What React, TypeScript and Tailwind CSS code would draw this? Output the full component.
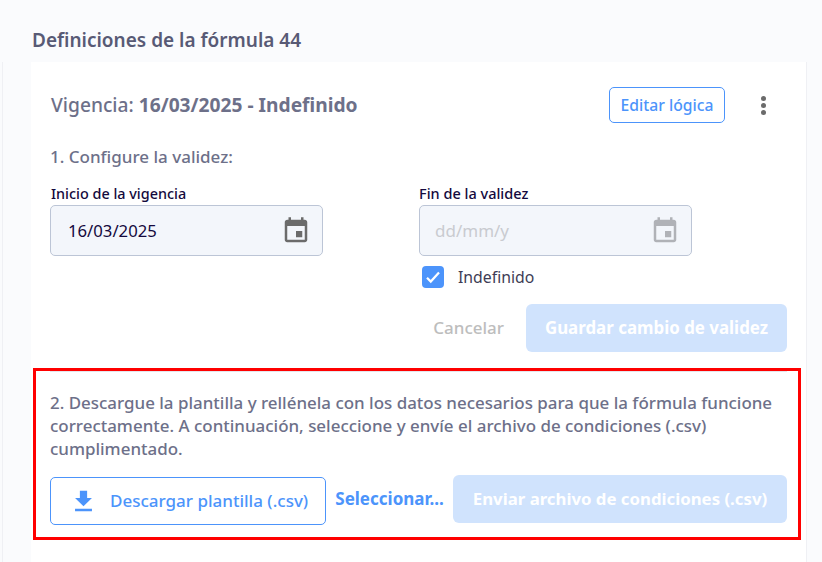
const Cal = ({ c }: { c: string }) => (
  <svg width="30" height="30" viewBox="0 0 24 24" fill={c}>
    <path d="M17 12h-5v5h5v-5zM16 1v2H8V1H6v2H5c-1.11 0-1.99.9-1.99 2L3 19c0 1.1.89 2 2 2h14c1.1 0 2-.9 2-2V5c0-1.1-.9-2-2-2h-1V1h-2zm3 18H5V8h14v11z" />
  </svg>
);

export default function App() {
  return (
    <div className="relative w-[822px] h-[562px] overflow-hidden bg-[#fafbfd] font-['Noto_Sans',sans-serif]">
      <div className="pl-[32px] pt-[27px] h-[62px] text-[19px] leading-[26px] font-semibold text-[#585a75]">
        Definiciones de la fórmula 44
      </div>
      <div className="ml-[2px] w-[805px] h-[500px] border-x border-[#eff0f4] pl-[28px]">
        <div className="w-[775px] h-full bg-white pl-[19px] pr-[19px]">
          <div className="flex items-center justify-between pt-[26px] h-[60px]">
            <div className="ml-[1px] text-[19.2px] leading-[26px] font-medium text-[#6d7089]">
              Vigencia: <span className="font-bold">16/03/2025 - Indefinido</span>
            </div>
            <div className="flex items-center">
              <button className="w-[116px] h-[36px] pt-[1px] rounded-[5px] border border-[#4c94fb] text-[#4c94fb] text-[15.7px] font-medium">
                Editar lógica
              </button>
              <div className="ml-[36px] mr-[21px] flex flex-col gap-[2px]">
                <span className="w-[5px] h-[5px] rounded-full bg-[#6b6b6b]" />
                <span className="w-[5px] h-[5px] rounded-full bg-[#6b6b6b]" />
                <span className="w-[5px] h-[5px] rounded-full bg-[#6b6b6b]" />
              </div>
            </div>
          </div>
          <div className="mt-[24px] text-[17px] leading-[22px] font-medium text-[#6d7089]">1. Configure la validez:</div>
          <div className="flex gap-[96px] mt-[15px]">
            <div className="w-[273px]">
              <div className="ml-[1px] pt-[1px] h-[20px] text-[14.4px] leading-[20px] font-medium text-[#14093d]">Inicio de la vigencia</div>
              <div className="mt-[2px] h-[51px] rounded-[5px] border border-[#bcc5d6] bg-[#f3f6fb] flex items-center justify-between pl-[17px] pr-[11px] text-[16.7px] text-[#14093d]">
                16/03/2025
                <Cal c="#6b6b6b" />
              </div>
            </div>
            <div className="w-[273px]">
              <div className="text-[14.5px] leading-[20px] font-medium text-[#14093d]">Fin de la validez</div>
              <div className="mt-[2px] h-[51px] rounded-[5px] border border-[#bcc5d6] bg-[#f3f6fb] flex items-center justify-between pl-[15px] pr-[11px] text-[17px] text-[#c9cbd0]">
                dd/mm/y
                <Cal c="#b0b2b7" />
              </div>
              <label className="flex items-center mt-[8px] ml-[3px] h-[26px] text-[15.8px] text-[#3e3c55]">
                <span className="w-[22px] h-[22px] rounded-[4px] bg-[#4c94fb] flex items-center justify-center">
                  <svg width="18" height="18" viewBox="0 0 24 24" fill="none" stroke="#fff" strokeWidth="3"><path d="M4 13l5 5L20 6" /></svg>
                </span>
                <span className="ml-[14px] pt-[1px]">Indefinido</span>
              </label>
            </div>
          </div>
          <div className="flex justify-end items-center mt-[14px]">
            <span className="text-[17px] font-medium text-[#bdbdbd] mr-[22px]">Cancelar</span>
            <button className="w-[261px] h-[48px] rounded-[6px] bg-[#d0e3fd] text-white text-[16.9px] font-bold">Guardar cambio de validez</button>
          </div>
          <div className="mt-[19px] h-px bg-[#e4e6ec]" />
          <p className="mt-[19px] text-[16.95px] leading-[23px] font-medium text-[#6d7089]">
            2. Descargue la plantilla y rellénela con los datos necesarios para que la fórmula funcione correctamente. A continuación, seleccione y envíe el archivo de condiciones (.csv) cumplimentado.
          </p>
          <div className="flex items-start justify-between mt-[15px]">
            <button className="mt-[2px] w-[276px] h-[48px] rounded-[5px] border border-[#4c94fb] text-[#4c94fb] text-[17px] font-medium flex items-center pl-[18px]">
              <svg width="29" height="29" viewBox="0 0 24 24" fill="#4c94fb"><path d="M19 9h-4V3H9v6H5l7 7 7-7zM5 18v2h14v-2H5z" /></svg>
              <span className="ml-[12px]">Descargar plantilla (.csv)</span>
            </button>
            <span className="mt-[13px] text-[17px] leading-[22px] font-bold text-[#4c94fb]">Seleccionar...</span>
            <button className="w-[334px] h-[48px] rounded-[6px] bg-[#d0e3fd] text-white text-[16.8px] font-bold">Enviar archivo de condiciones (.csv)</button>
          </div>
        </div>
      </div>
      <div className="absolute left-[33px] top-[368px] w-[768px] h-[172px] border-[3px] border-[#ff0000]" />
    </div>
  );
}
